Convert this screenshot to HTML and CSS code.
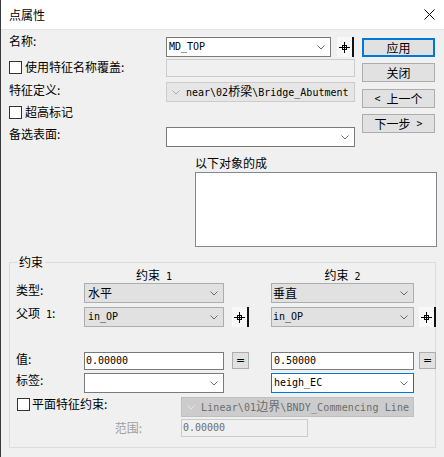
FILE: index.html
```html
<!DOCTYPE html>
<html lang="zh-CN">
<head>
<meta charset="utf-8">
<title>点属性</title>
<link rel="stylesheet" href="styles.css">
</head>
<body>
<div class="window">
  <div class="titlebar">
    <span class="title">点属性</span>
    <svg class="close" width="11" height="11" viewBox="0 0 11 11"><path d="M0.5 0.5L10.5 10.5M10.5 0.5L0.5 10.5" stroke="#000" stroke-width="1"/></svg>
  </div>

  <div class="top">
    <div class="form">
      <div class="row row1">
        <span class="lbl lbl1">名称:</span>
        <div class="ctrls">
          <div class="combo white w165"><span class="mono">MD_TOP</span><svg class="chev" width="8" height="5" viewBox="0 0 8 5"><polyline points="0.5,0.5 4,4 7.5,0.5" fill="none" stroke="#6a6a6a"/></svg></div>
          <svg class="pin" width="17" height="20" viewBox="0 0 17 20"><rect x="0" y="0" width="15" height="20" fill="#f8f8f8"/><path d="M2 10.5h11M7.5 5v11" stroke="#000"/><rect x="5.5" y="8.5" width="4" height="4" fill="none" stroke="#000"/><rect x="15" y="0" width="2" height="20" fill="#111"/></svg>
        </div>
      </div>
      <div class="row row2">
        <label class="check"><span class="box"></span>使用特征名称覆盖:</label>
        <div class="field disabled h18"></div>
      </div>
      <div class="row row3">
        <span class="lbl lbl3">特征定义:</span>
        <div class="combo ro-light"><svg class="chev-left" width="8" height="5" viewBox="0 0 8 5"><polyline points="0.5,0.5 4,4 7.5,0.5" fill="none" stroke="#a8a8a8"/></svg><span class="mono">near\02<span class="cjk">桥梁</span>\Bridge_Abutment</span></div>
      </div>
      <div class="row row4">
        <label class="check"><span class="box"></span>超高标记</label>
      </div>
      <div class="row row5">
        <span class="lbl lbl5">备选表面:</span>
        <div class="combo white"><svg class="chev" width="8" height="5" viewBox="0 0 8 5"><polyline points="0.5,0.5 4,4 7.5,0.5" fill="none" stroke="#6a6a6a"/></svg></div>
      </div>
    </div>
    <div class="buttons">
      <div class="btn default">应用</div>
      <div class="btn b2">关闭</div>
      <div class="btn b3"><span class="mono">&lt; </span>上一个</div>
      <div class="btn b4">下一步<span class="mono"> &gt;</span></div>
    </div>
  </div>

  <div class="members">
    <div class="members-label">以下对象的成</div>
    <div class="listbox"></div>
  </div>

  <div class="group">
    <div class="legend">约束</div>
    <div class="grow ghead">
      <span class="c2 center">约束<span class="mono"> 1</span></span>
      <span class="c6 center">约束<span class="mono"> 2</span></span>
    </div>
    <div class="grow g1">
      <span class="lbl glbl">类型:</span>
      <div class="combo ro c2"><span class="txt">水平</span><svg class="chev" width="8" height="5" viewBox="0 0 8 5"><polyline points="0.5,0.5 4,4 7.5,0.5" fill="none" stroke="#6a6a6a"/></svg></div>
      <div class="combo ro c6 pad1"><span class="txt">垂直</span><svg class="chev" width="8" height="5" viewBox="0 0 8 5"><polyline points="0.5,0.5 4,4 7.5,0.5" fill="none" stroke="#6a6a6a"/></svg></div>
    </div>
    <div class="grow g2">
      <span class="lbl glbl">父项<span class="mono"> 1</span>:</span>
      <div class="combo ro c2"><span class="mono">in_OP</span><svg class="chev" width="8" height="5" viewBox="0 0 8 5"><polyline points="0.5,0.5 4,4 7.5,0.5" fill="none" stroke="#6a6a6a"/></svg></div>
      <svg class="pin c4" width="17" height="20" viewBox="0 0 17 20"><rect x="0" y="0" width="15" height="20" fill="#f8f8f8"/><path d="M2 10.5h11M7.5 5v11" stroke="#000"/><rect x="5.5" y="8.5" width="4" height="4" fill="none" stroke="#000"/><rect x="15" y="0" width="2" height="20" fill="#111"/></svg>
      <div class="combo ro c6 pad1"><span class="mono">in_OP</span><svg class="chev" width="8" height="5" viewBox="0 0 8 5"><polyline points="0.5,0.5 4,4 7.5,0.5" fill="none" stroke="#6a6a6a"/></svg></div>
      <svg class="pin c8" width="17" height="20" viewBox="0 0 17 20"><rect x="0" y="0" width="15" height="20" fill="#f8f8f8"/><path d="M2 10.5h11M7.5 5v11" stroke="#000"/><rect x="5.5" y="8.5" width="4" height="4" fill="none" stroke="#000"/><rect x="15" y="0" width="2" height="20" fill="#111"/></svg>
    </div>
    <div class="grow g3">
      <span class="lbl glbl">值:</span>
      <div class="field value c2"><span class="mono">0.00000</span></div>
      <div class="eq c4">=</div>
      <div class="field value c6"><span class="mono">0.50000</span></div>
      <div class="eq c8">=</div>
    </div>
    <div class="grow g4">
      <span class="lbl glbl">标签:</span>
      <div class="combo white c2"><svg class="chev" width="8" height="5" viewBox="0 0 8 5"><polyline points="0.5,0.5 4,4 7.5,0.5" fill="none" stroke="#6a6a6a"/></svg></div>
      <div class="combo white focus c6"><span class="mono">heigh_EC</span><svg class="chev" width="8" height="5" viewBox="0 0 8 5"><polyline points="0.5,0.5 4,4 7.5,0.5" fill="none" stroke="#6a6a6a"/></svg></div>
    </div>
    <div class="prow g5">
      <label class="check"><span class="box"></span>平面特征约束:</label>
      <div class="combo ro-dis"><svg class="chev-left" width="8" height="5" viewBox="0 0 8 5"><polyline points="0.5,0.5 4,4 7.5,0.5" fill="none" stroke="#e6e6e6"/></svg><span class="mono wide">Linear\01<span class="cjk">边界</span>\BNDY_Commencing Line</span></div>
    </div>
    <div class="prow g6">
      <span class="lbl range">范围:</span>
      <div class="field disabled range-field"><span class="mono">0.00000</span></div>
    </div>
  </div>
</div>
</body>
</html>
```

FILE: styles.css
```css
* { box-sizing: border-box; }
html, body { margin: 0; padding: 0; }
body {
  width: 444px;
  height: 457px;
  overflow: hidden;
  background: #f0f0f0;
  font-family: "Noto Sans CJK SC", "Microsoft YaHei", sans-serif;
  font-size: 12px;
  color: #000;
}
.window {
  height: 457px;
  border-left: 1px solid #3a3a3a;
  background: #f0f0f0;
}
.titlebar {
  height: 30px;
  background: #fff;
  border-bottom: 1px solid #e4e4e4;
  display: flex;
  align-items: center;
  justify-content: space-between;
  padding: 0 9px 0 8px;
}
.title { font-size: 12px; line-height: 14px; }
.close { display: block; }

/* top area */
.top { display: flex; padding: 7px 0 0 8px; }
.form { width: 346px; display: flex; flex-direction: column; }
.row { display: grid; grid-template-columns: 157px 189px; align-items: start; }
.row1 { height: 20px; }
.row2 { height: 18px; margin-top: 2px; }
.row3 { height: 20px; margin-top: 5px; }
.row4 { height: 20px; margin-top: 2px; }
.row5 { height: 20px; margin-top: 3px; }
.lbl { line-height: 14px; white-space: nowrap; }
.lbl1 { margin-top: -3px; }
.lbl3 { margin-top: 1px; }
.lbl5 { margin-top: 0; }
.ctrls { display: flex; gap: 6px; }
.w165 { width: 165px; }

.check { display: flex; align-items: center; line-height: 14px; white-space: nowrap; }
.box {
  width: 13px; height: 13px;
  background: #fff;
  border: 1px solid #333;
  margin-right: 3px;
  flex: none;
}
.row2 .check, .row4 .check { margin-top: 1px; }

.combo {
  height: 20px;
  display: flex;
  align-items: center;
  padding: 0 5px 0 2px;
  border: 1px solid #7a7a7a;
  overflow: hidden;
  white-space: nowrap;
}
.combo .chev { margin-left: auto; flex: none; }
.combo .chev-left { flex: none; margin: 0 6px 0 5px; }
.white { background: #fff; }
.focus { border-color: #0078d7; }
.ro { background: #e1e1e1; border-color: #adadad; padding-left: 3px; }
.ro.pad1 { padding-left: 1px; }
.ro-light { background: #e6e6e6; border-color: #cccccc; padding-left: 0; }
.ro-dis { background: #cccccc; border-color: #bfbfbf; padding-left: 0; color: #6d6d6d; }
.txt { line-height: 14px; }

.mono {
  font-family: "DejaVu Sans Mono", "Liberation Mono", monospace;
  font-size: 10px;
  line-height: 14px;
  white-space: pre;
}
.wide { letter-spacing: 0.12px; }
.cjk { font-family: "Noto Sans CJK SC", sans-serif; font-size: 12px; letter-spacing: 0; }

.field {
  display: flex;
  align-items: center;
  padding: 0 2px 0 1px;
  white-space: nowrap;
}
.h18 { height: 18px; }
.disabled { background: #f0f0f0; border: 1px solid #cccccc; color: #6d6d6d; }
.value { height: 18px; background: #fff; border: 1px solid #7a7a7a; }
.value.c6 { padding-left: 2px; }

.pin { display: block; }

.buttons { margin-left: 7px; padding-top: 1px; display: flex; flex-direction: column; }
.btn {
  width: 73px;
  height: 19px;
  background: #e1e1e1;
  border: 1px solid #adadad;
  display: flex;
  align-items: center;
  justify-content: center;
  line-height: 14px;
  white-space: pre;
}
.btn .mono { font-size: 10px; }
.btn.default { border: 2px solid #0078d7; }
.b2 { margin-top: 6px; }
.b3 { margin-top: 7px; }
.b4 { margin-top: 6px; }

/* members */
.members { margin: 9px 0 0 194px; }
.members-label { height: 16px; line-height: 14px; }
.listbox { width: 242px; height: 75px; background: #fff; border: 1px solid #828790; }

/* constraint group */
.group {
  margin: 15px 0 0 8px;
  width: 427px;
  border: 1px solid #dcdcdc;
  padding: 0 0 10px 6px;
}
.legend {
  margin: -8px 0 0 1px;
  width: fit-content;
  padding: 0 2px;
  background: #f0f0f0;
  line-height: 14px;
  height: 14px;
}
.grow {
  display: grid;
  grid-template-columns: 68px 140px 8px 17px 22px 143px 5px 17px;
  align-items: start;
}
.ghead { height: 12px; line-height: 12px; }
.ghead .mono { line-height: 12px; }
.center { text-align: center; }
.c2 { grid-column: 2; }
.c4 { grid-column: 4; }
.c6 { grid-column: 6; }
.c8 { grid-column: 8; }
.glbl { grid-column: 1; }
.g1 { margin-top: 2px; height: 20px; }
.g2 { margin-top: 4px; height: 20px; }
.g2 .glbl { margin-top: -1px; }
.g3 { margin-top: 25px; height: 18px; }
.g4 { margin-top: 3px; height: 20px; }
.eq {
  width: 17px; height: 17px;
  background: #e1e1e1;
  border: 1px solid #adadad;
  display: flex; align-items: center; justify-content: center;
  font-family: "DejaVu Sans", sans-serif;
  font-size: 11px;
  line-height: 1;
}
.prow {
  display: grid;
  grid-template-columns: 165px 233px;
  align-items: start;
}
.g5 { margin-top: 4px; height: 20px; }
.g5 .check .box { margin-left: 1px; margin-right: 2px; }
.g6 { margin-top: 2px; height: 18px; align-items: center; }
.range { text-align: right; padding-right: 39px; color: #a0a0a0; }
.range-field { width: 127px; height: 18px; padding-left: 1px; }
```
